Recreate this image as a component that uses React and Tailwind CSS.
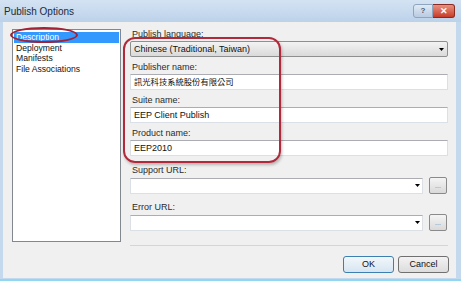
// Publish Options dialog (Windows 7 look)

const FONT = { fontFamily: '"Liberation Sans", Arial, "Noto Sans CJK TC", sans-serif' };

function Arrow({ className = "" }) {
  return (
    <svg width="5" height="3" viewBox="0 0 5 3" className={className}>
      <path d="M0 0h5L2.5 3z" fill="#000" />
    </svg>
  );
}

function Label({ children, className = "" }) {
  return <div className={`h-[13px] pl-[2px] text-[9px] leading-[13px] text-[#2b2b2b] ${className}`}>{children}</div>;
}

function TextBox({ value, cjk }) {
  return (
    <div className="flex h-[16px] w-[318px] items-center border border-[#dbdfe6] border-t-[#abadb3] bg-white pl-[3px]">
      <span className={`${cjk ? "text-[8.3px]" : "text-[9px]"} leading-none text-[#111]`}>{value}</span>
    </div>
  );
}

function BrowseRow() {
  return (
    <div className="flex items-center gap-[6px]">
      <div className="flex h-[16px] w-[293px] items-center justify-end border border-[#dbdfe6] border-t-[#abadb3] bg-white pr-[2px]">
        <Arrow />
      </div>
      <div className="flex h-[17px] w-[18px] items-center justify-center rounded-[2px] border border-[#8a8a8a] bg-gradient-to-b from-[#f4f4f4] to-[#d9d9d9] text-[7px] leading-none text-[#777]">
        ...
      </div>
    </div>
  );
}

const ITEMS = ["Description", "Deployment", "Manifests", "File Associations"];

export default function App() {
  return (
    <div className="relative flex h-[281px] w-[461px] flex-col overflow-hidden bg-[#c4d8ee]" style={FONT}>
      {/* title bar */}
      <div className="flex h-[22px] items-center justify-between bg-gradient-to-b from-[#d4e3f3] to-[#bcd2ea] pl-[4px] pr-[6px]">
        <span className="text-[10px] text-[#1b2a3c]">Publish Options</span>
        <div className="flex items-start self-start pt-[4px]">
          <div className="flex h-[14px] w-[20px] items-center justify-center rounded-l-[3px] border border-[#8ea4bf] bg-gradient-to-b from-[#e0eaf5] to-[#b8cbe1] text-[8px] font-bold leading-none text-[#4a5e78]">
            ?
          </div>
          <div className="flex h-[14px] w-[22px] items-center justify-center rounded-r-[3px] border border-l-0 border-[#8b2a22] bg-gradient-to-b from-[#e8907f] to-[#c73a28] text-[9px] font-bold leading-none text-white">
            ✕
          </div>
        </div>
      </div>

      {/* client area */}
      <div className="mb-[3px] ml-[3px] mr-[5px] flex flex-1 bg-[#f0f0f0] pt-[6px]">
        <div className="ml-[9px] mt-[1px] h-[213px] w-[109px] border border-[#828790] bg-white p-[1px]">
          {ITEMS.map((it, i) => (
            <div
              key={it}
              className={`h-[10.5px] pl-[2px] text-[8.6px] leading-[10.5px] ${i === 0 ? "mt-[1px] bg-[#3399ff] text-white" : "text-[#111]"}`}
            >
              {it}
            </div>
          ))}
        </div>

        <div className="ml-[9px] flex w-[319px] flex-col">
          <Label>Publish language:</Label>
          <div className="flex h-[16px] w-[318px] items-center justify-between rounded-[2px] border border-[#8e8f8f] bg-gradient-to-b from-[#f3f3f3] to-[#dadada] pl-[3px] pr-[3px]">
            <span className="text-[9px] leading-none text-[#111]">Chinese (Traditional, Taiwan)</span>
            <Arrow />
          </div>

          <Label className="mt-[4px]">Publisher name:</Label>
          <TextBox value="訊光科技系統股份有限公司" cjk />

          <Label className="mt-[4px]">Suite name:</Label>
          <TextBox value="EEP Client Publish" />

          <Label className="mt-[4px]">Product name:</Label>
          <TextBox value="EEP2010" />

          <Label className="mt-[8px]">Support URL:</Label>
          <BrowseRow />

          <Label className="mt-[7px]">Error URL:</Label>
          <BrowseRow />

          <div className="mt-[14px] h-[2px] w-[318px] border-t border-[#d5d5d5] border-b-white" />

          <div className="mt-[9px] flex justify-end gap-[4px]">
            <div className="flex h-[17px] w-[51px] items-center justify-center rounded-[3px] border border-[#3c7fb1] bg-gradient-to-b from-[#f2f7fb] to-[#d6e5f1] text-[9px] leading-none text-[#111]">
              OK
            </div>
            <div className="flex h-[17px] w-[51px] items-center justify-center rounded-[3px] border border-[#707070] bg-gradient-to-b from-[#f3f3f3] to-[#dcdcdc] text-[9px] leading-none text-[#111]">
              Cancel
            </div>
          </div>
        </div>
      </div>
      <div className="absolute bottom-0 left-0 h-[2px] w-full bg-[#8fd8f2]" />

      {/* red annotations */}
      <div className="absolute left-[10px] top-[27px] h-[16px] w-[68px] rounded-[50%] border-2 border-[#a32236]" />
      <div className="absolute left-[123px] top-[37px] h-[126px] w-[158px] rounded-[12px] border-2 border-[#b02a3c] shadow-[1px_2px_3px_rgba(0,0,0,0.25)]" />
    </div>
  );
}
